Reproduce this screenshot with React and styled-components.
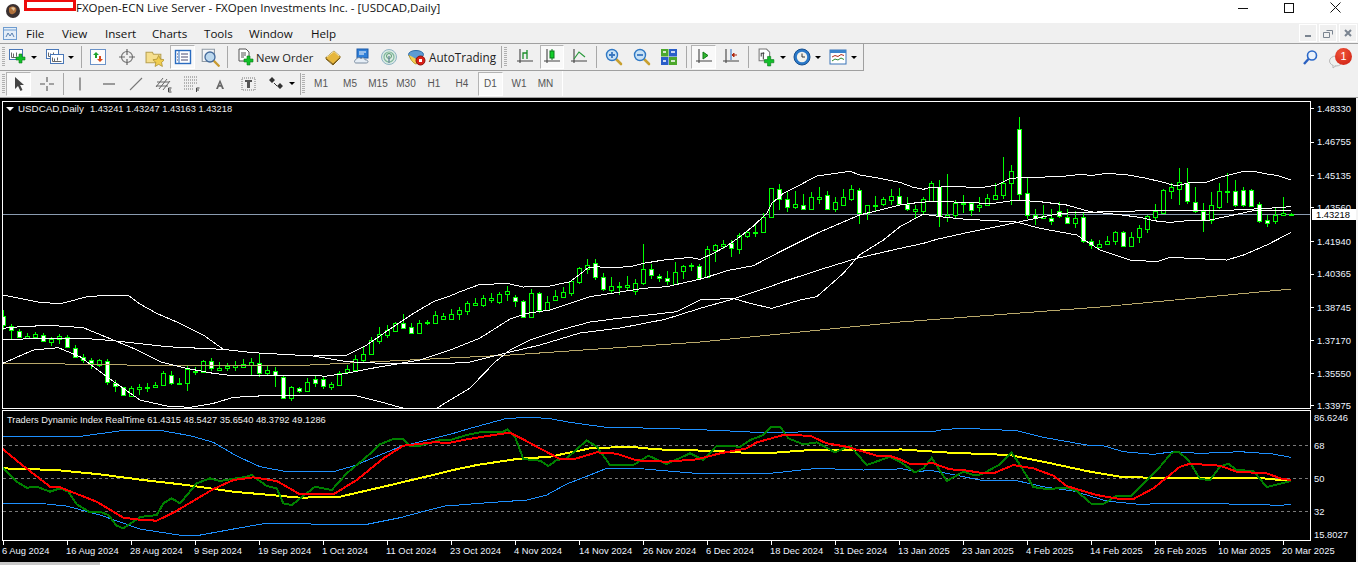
import React from "react";
import styled, { createGlobalStyle } from "styled-components";

const Global = createGlobalStyle`
  html, body { margin: 0; padding: 0; background: #fff; overflow: hidden; }
  #root { width: 1358px; height: 565px; }
`;

const Screen = styled.div`
  width: 1358px; height: 565px; display: flex; flex-direction: column; overflow: hidden;
  font-family: "Open Sans", "Noto Sans", sans-serif; color: #000; background: #f4f4f4;
`;
const TitleBar = styled.header`
  height: 23px; flex: none; background: #fff; display: flex; align-items: flex-start; position: relative;
`;
const AppIcon = styled.div`margin: 1px 0 0 6px; width: 14px; height: 14px; flex: none;`;
const Redacted = styled.div`
  width: 52px; height: 11px; box-sizing: border-box; margin-left: 4px; flex: none;
  background: #fff; border: solid #ee0a0a; border-width: 2px 3px 3px 3px;
`;
const TitleText = styled.div`
  font-size: 11.5px; line-height: 16px; margin-top: 0; color: #111; white-space: nowrap;
`;
const WinButtons = styled.div`margin-left: auto; display: flex; height: 15px;`;
const WinBtn = styled.div`width: 46px; height: 15px; display: flex; align-items: center; justify-content: center;`;
const MenuBar = styled.nav`
  height: 20px; flex: none; background: #f0f0f0; display: flex; align-items: center;
`;
const MenuIcon = styled.div`width: 26px; height: 20px; display:flex; align-items:center; padding-left:3px; box-sizing:border-box;`;
const MenuItem = styled.span`
  font-size: 11.6px; width: ${p => p.$w}px; color: #111;
`;
const MdiGroup = styled.div`margin-left: auto; display: flex; gap: 2px; margin-right: 1px;`;
const MdiBtn = styled.div`
  width: 16px; height: 16px; border: 1px solid #fff; display: flex; align-items: center; justify-content: center;
`;
const Bars = styled.div`
  flex: none; background: #f0f0f0; border-top: 1px solid #a0a0a0; border-bottom: 1px solid #a0a0a0; height: 53px;
  display: flex; flex-direction: column;
`;
const BarRow = styled.div`display: flex; height: ${p => p.$h}px; flex: none;`;
const Toolbar = styled.div`
  display: flex; align-items: center; height: 100%; padding-left: 2px; box-sizing: border-box;
  border-right: 1px solid ${p => p.$edge};
  border-bottom: ${p => p.$bottom ? "1px solid #a0a0a0" : "none"};
  width: ${p => p.$w}px; flex: none;
`;
const Grip = styled.div`
  width: 3px; height: 20px; flex: none; margin-right: ${p => p.$mr || 0}px; margin-left: ${p => p.$ml || 0}px;
  background: repeating-linear-gradient(to bottom, #b0b0b0 0 1px, #f0f0f0 1px 2px);
`;
const Btn = styled.div`
  width: ${p => p.$w}px; margin-left: ${p => p.$ml || 0}px; height: 24px; flex: none; box-sizing: border-box;
  display: flex; align-items: center; justify-content: ${p => p.$left ? "flex-start" : "center"};
  padding-left: ${p => p.$pl || 0}px; gap: ${p => p.$gap || 0}px;
  ${p => p.$active ? `
    background: #f9f9f9;
    border-top: 1px solid #b4b4b4; border-left: 1px solid #b4b4b4;
    border-right: 1px solid #fff; border-bottom: 1px solid #fff;
  ` : ""}
`;
const Sep = styled.div`
  width: ${p => p.$w}px; height: 22px; flex: none; display: flex; justify-content: center;
  &::before { content: ""; width: 1px; height: 100%; background: #a8a8a8; }
`;
const Caret = styled.span`
  width: 0; height: 0; flex: none; border-left: 3px solid transparent; border-right: 3px solid transparent;
  border-top: 3px solid #000;
`;
const BtnLabel = styled.span`font-size: ${p => p.$size}px; color: #222; white-space: nowrap;`;
const Period = styled.span`font-family: "Liberation Sans", sans-serif; font-size: 10px; color: #555;`;
const RightTools = styled.div`display: flex; margin-left: auto; align-items: center; height: 100%; gap: 10px; padding-right: 5px;`;
const Notice = styled.div`
  position: relative; width: 24px; height: 22px; display: flex; align-items: flex-end;
`;
const Badge = styled.span`
  position: absolute; right: 1px; top: 1px; width: 17px; height: 17px; border-radius: 50%;
  background: radial-gradient(circle at 40% 30%, #f0543a, #cc1c10); color: #fff;
  font-size: 11px; line-height: 17px; text-align: center; font-family: "Liberation Sans", sans-serif;
`;
const ChartWindow = styled.main`
  flex: 1; background: #000; display: flex; flex-direction: column; min-height: 0; margin-right: 2px;
  position: relative;
`;
const Pane = styled.svg`display: block; flex: none;`;
const Footer = styled.footer`
  height: 3px; flex: none; display: flex; background: #fff;
`;
const FooterTab = styled.div`width: 100px; background: #c8c8c8;`;
const Legend = styled.div`
  position: absolute; left: ${p => p.$x}px; top: ${p => p.$y}px; color: #f0f0f0; white-space: pre;
  font: 9.3px/12px "Liberation Sans", sans-serif; display: flex; align-items: center; gap: 4px;
`;
const LegendName = styled.span`font-size: 9.8px; margin-right: 2px;`;
const LegendMark = styled.span`
  width: 0; height: 0; border-left: 4px solid transparent; border-right: 4px solid transparent; border-top: 4px solid #fff;
`;
const AxisText = styled.text`
  font-family: "Liberation Sans", sans-serif; font-size: 9.4px; fill: ${p => p.$fill || "#eef4ff"};
`;

/* [high, bodyTop, bodyBottom, low, bearish-white] in crop coordinates (y = origin + v/3) */
const C1 = [[90,108,135,150,1],[132,137,150,178,1],[148,154,170,173,1],[158,168,175,178,0],[155,162,172,178,0],[158,164,184,186,1],[172,178,185,198,0],[162,168,178,192,0],[165,170,202,205,1],[195,203,230,233,1],[222,230,240,248,1],[235,240,250,268,1],[236,241,256,262,0],[238,242,306,314,1],[300,308,318,336,1],[320,322,345,348,1],[318,325,348,350,0],[312,320,326,345,0],[308,320,322,336,0],[306,316,320,324,0],[272,280,316,318,0],[272,284,310,314,1],[295,309,310,311,0],[258,268,310,332,0],[262,272,277,285,1],[240,244,276,278,0],[235,244,264,272,1],[246,264,270,274,0],[248,258,265,273,0],[243,256,260,272,0],[238,253,260,264,0],[235,247,255,286,0],[220,248,278,292,1],[255,271,278,286,0],[262,272,286,320,1],[288,290,354,356,1],[318,322,354,362,0],[320,323,334,338,1],[295,305,334,336,0],[288,298,308,322,1],[288,298,318,326,1],[305,313,320,330,0],[274,278,314,316,0],[255,268,277,282,0],[225,238,270,276,0],[202,223,240,250,0],[172,180,222,226,0],[140,163,184,192,0],[135,151,164,175,0],[125,130,152,156,0],[102,130,143,147,1],[128,142,158,160,1],[120,130,158,162,0],[120,126,130,136,0],[94,105,128,130,0],[100,108,116,120,0]];
const C2 = [[628,642,656,660,0],[622,631,643,660,0],[603,610,632,645,0],[595,610,614,618,0],[586,595,614,620,0],[580,595,601,608,0],[575,583,605,612,0],[558,574,583,604,0],[585,590,604,622,1],[600,604,652,655,1],[568,580,652,654,0],[575,580,629,640,1],[588,606,630,632,0],[570,589,601,603,0],[562,577,590,594,0],[540,544,579,588,0],[502,505,545,552,0],[478,494,508,522,0],[478,490,532,540,1],[520,532,568,572,1],[532,557,569,578,0],[545,558,560,585,0],[528,556,561,572,0],[538,550,572,586,0],[432,508,550,554,0],[492,508,526,536,1],[522,527,535,546,1],[514,535,544,555,1],[486,517,551,553,0],[494,499,514,538,0],[490,496,497,514,0],[492,499,533,538,1],[438,448,530,532,0],[432,436,450,486,0],[420,431,438,446,0],[420,430,445,472,1],[400,406,446,462,0],[390,396,408,414,0],[372,395,398,412,0],[340,352,395,398,0],[264,265,352,354,0],[252,268,298,330,1],[275,298,320,336,1],[274,313,320,328,0],[282,314,326,330,1],[275,292,326,328,0],[262,290,296,312,0],[274,286,326,330,1],[290,307,326,336,0],[268,292,314,318,0],[256,268,296,304,0],[265,271,339,372,1],[315,316,340,360,0],[288,314,316,336,0],[292,298,312,318,0],[266,287,299,316,0],[265,287,312,314,1],[290,313,328,332,1],[315,328,332,354,0],[292,298,332,345,0],[243,250,303,306,0],[240,262,348,380,1],[222,345,350,365,0],[300,310,346,355,0],[285,308,309,338,0],[305,309,331,348,1],[292,314,322,336,0],[282,295,315,318,0],[250,284,296,300,0],[170,248,284,298,0],[195,212,248,315,0],[52,88,282,300,1],[232,280,346,356,1],[328,344,354,375,1],[316,349,355,358,0],[328,355,364,374,1],[306,332,348,354,1],[326,350,368,370,1],[332,355,368,385,0],[340,352,424,430,1],[418,424,434,448,1],[420,433,442,444,0],[408,424,433,435,0],[392,397,422,434,0],[392,397,438,440,1],[396,412,437,440,0],[376,385,412,430,0],[346,349,386,398,0],[312,333,350,362,0],[266,271,339,342,0],[250,260,274,296,0],[204,247,268,315,0],[204,248,304,312,1],[262,305,334,338,1],[310,334,360,395,1],[276,316,360,372,0],[248,274,320,326,0],[220,273,275,310,0],[240,274,316,320,1],[262,271,314,322,1],[268,271,318,322,1],[306,311,364,370,1],[344,361,368,380,1],[325,344,362,372,0],[290,340,344,348,0],[338,341,344,348,0]];

const candles = [
  ...C1.map(c => [280 + c[0]/3, 280 + c[1]/3, 280 + c[2]/3, 280 + c[3]/3, c[4]]),
  ...C2.map(c => [100 + c[0]/3, 100 + c[1]/3, 100 + c[2]/3, 100 + c[3]/3, c[4]]),
];

const conv = (pts, ox, oy) => pts.map(([x, y]) => [ox + x/3, oy + y/3]);
/* the small offset keeps flat segments off the pixel boundary, where crisp strokes would vanish */
const pstr = pts => pts.map(([x, y]) => `${(x + 0.03).toFixed(2)},${(y + 0.03).toFixed(2)}`).join(" ");

const A = [...conv([[8,45],[120,67],[180,71],[210,64],[260,50],[320,46],[385,46],[420,72],[470,100],[540,130],[610,165],[670,208],[760,218],[940,228],[1040,226],[1100,195],[1180,140],[1240,100],[1300,65],[1350,48]],0,280),
  ...conv([[30,575],[90,553],[110,553],[170,550],[220,561],[300,558],[360,545],[415,503],[440,500],[470,503],[540,500],[580,490],[640,480],[720,472],[750,478],[790,460],[830,438],[870,410],[910,378],[950,340],[965,310],[1000,280],[1040,260],[1100,228],[1200,214],[1230,225],[1290,235],[1350,247]],450,100),
  ...conv([[40,262],[70,268],[90,262],[150,260],[250,262],[290,255],[330,235],[380,232],[480,230],[550,222],[570,227],[620,220],[680,224],[740,235],[790,247],[830,258],[870,247],[920,246],[960,232],[1030,214],[1060,214],[1100,222],[1130,226],[1172,240]],900,100)];
const B = [...conv([[8,145],[60,140],[150,136],[250,143],[340,180],[400,205],[480,245],[560,265],[640,280],[700,287],[980,288],[1040,280],[1130,262],[1260,240],[1350,210]],0,280),
  ...[[480,338],[510,319]],
  ...conv([[230,640],[300,630],[420,590],[580,565],[650,560],[760,535],[830,512],[910,497],[990,455],[1100,400],[1228,345],[1350,315]],450,100),
  ...conv([[50,308],[110,303],[200,308],[280,310],[350,300],[420,305],[500,315],[570,335],[650,343],[720,352],[760,362],[810,367],[860,362],[930,360],[1000,345],[1060,332],[1110,330],[1172,331]],900,100)];
const D = [...conv([[8,178],[240,174],[340,182],[500,200],[670,208],[760,218],[940,228],[1040,245],[1150,250],[1350,250]],0,280),
  [470,362],[510,352],[540,345],[580,333],[620,328],
  ...conv([[645,658],[750,625],[850,597],[960,560],[1000,545],[1100,512],[1220,475],[1350,445]],450,100),
  ...conv([[70,430],[110,418],[200,398],[300,378],[360,365],[480,340],[550,337],[700,333],[1000,330],[1100,325],[1172,320]],900,100)];
const E = [...conv([[8,250],[100,210],[175,203],[240,230],[320,290],[420,360],[500,378],[570,382],[640,370],[700,352],[830,345],[1060,345],[1140,365],[1200,382]],0,280),
  [408,409],[436,409],[445,403],[470,388],[495,362],[510,350],[530,340],[560,330],[590,322],[613,319],
  ...conv([[680,635],[750,600],[850,595],[900,610],[965,625],[1050,600],[1100,590],[1180,520],[1228,465],[1300,420],[1350,380]],450,100),
  ...conv([[70,342],[120,350],[200,358],[280,362],[350,366],[420,385],[530,405],[600,450],[690,480],[770,485],[810,472],[980,480],[1030,465],[1100,435],[1172,398]],900,100)];
const MA = [[3,363],[128,365],[310,365],[450,358],[510,355],[700,342],[790,333],[900,322],[1100,307],[1291,289]];

const ind = (a, b, c) => [...conv(a,0,405),...conv(b,450,405),...conv(c,900,405)];
const BU = ind([[8,95],[235,95],[370,76],[480,76],[570,92],[640,112],[710,153],[780,185],[860,200],[1000,200],[1060,183],[1200,125],[1340,90]],
  [[0,88],[60,70],[170,40],[250,37],[300,41],[360,52],[470,67],[640,70],[800,76],[960,84],[1070,80],[1340,80]],
  [[0,80],[100,80],[130,73],[200,70],[350,77],[430,97],[560,120],[610,122],[670,140],[760,148],[820,140],[900,145],[1020,140],[1120,147],[1172,157]]);
const BL = ind([[8,295],[120,295],[200,303],[300,330],[420,372],[550,392],[590,392],[700,372],[790,356],[1100,358],[1200,338],[1290,314],[1340,302]],
  [[0,302],[100,294],[230,285],[290,270],[350,237],[420,210],[470,190],[560,190],[740,205],[850,205],[960,205],[1100,190],[1240,195],[1340,192]],
  [[0,190],[50,200],[90,196],[130,203],[240,225],[350,227],[430,245],[520,258],[620,288],[720,298],[800,295],[1090,298],[1130,302],[1172,298]]);
const YL = ind([[8,190],[170,195],[300,208],[430,225],[560,240],[700,260],[900,278],[1020,275],[1180,238],[1340,200]],
  [[0,197],[80,180],[200,162],[300,155],[420,130],[540,125],[620,133],[800,138],[900,144],[960,144],[1080,135],[1340,135]],
  [[0,133],[150,143],[330,150],[430,170],[560,198],[660,215],[800,220],[1000,218],[1090,220],[1172,228]]);
const RD = ind([[8,132],[60,175],[150,245],[180,247],[290,290],[370,338],[420,344],[470,347],[520,323],[640,252],[700,225],[760,217],[830,228],[900,268],[1000,268],[1070,225],[1150,160],[1210,122],[1300,112],[1345,113]],
  [[0,113],[50,103],[130,90],[180,83],[220,103],[260,125],[330,162],[370,163],[440,142],[500,146],[560,166],[650,170],[740,163],[810,145],[890,130],[920,112],[1000,90],[1080,92],[1130,115],[1190,125],[1280,152],[1320,153]],
  [[0,163],[30,177],[100,175],[150,193],[190,195],[240,203],[280,205],[340,180],[400,190],[460,212],[500,243],[590,270],[660,282],[700,282],[760,250],[840,185],[870,176],[960,182],[1010,200],[1100,205],[1150,223],[1172,224]]);
const GR = ind([[8,188],[50,230],[80,248],[110,245],[150,260],[180,250],[205,260],[230,298],[270,322],[300,320],[325,330],[350,362],[370,370],[420,336],[470,330],[490,295],[515,280],[540,295],[590,235],[630,220],[660,228],[740,215],[755,210],[800,243],[830,250],[850,295],[875,300],[945,245],[995,255],[1040,205],[1100,155],[1140,118],[1180,102],[1210,102],[1230,122],[1260,122],[1320,105],[1345,105]],
  [[0,105],[50,90],[100,80],[160,80],[172,73],[195,95],[220,162],[270,167],[295,183],[320,165],[350,160],[410,106],[440,125],[480,180],[550,180],[595,152],[650,177],[720,145],[760,165],[800,122],[870,125],[900,105],[940,90],[965,65],[990,65],[1015,100],[1060,118],[1100,112],[1155,142],[1200,122],[1250,180],[1320,155]],
  [[0,170],[45,202],[70,190],[95,158],[140,228],[190,200],[220,210],[245,208],[300,178],[335,143],[360,180],[400,246],[440,252],[500,248],[530,258],[575,297],[610,297],[650,272],[695,272],[780,185],[815,143],[835,140],[865,165],[900,222],[930,225],[960,185],[985,176],[1010,195],[1060,198],[1100,246],[1172,228]]);

const priceLabels = [["1.48330",108],["1.46755",141.5],["1.45135",175],["1.43560",207],["1.41940",241],["1.40365",273.5],["1.38745",307],["1.37170",340],["1.35550",373],["1.33975",405]];
const subLabels = [["86.6246",1314,417],["68",1314,445.5],["50",1314,478],["32",1314,511],["15.8027",1314,534]];
const dates = [["6 Aug 2024",2],["16 Aug 2024",66],["28 Aug 2024",130],["9 Sep 2024",194],["19 Sep 2024",258],["1 Oct 2024",322],["11 Oct 2024",386],["23 Oct 2024",450],["4 Nov 2024",514],["14 Nov 2024",579],["26 Nov 2024",643],["6 Dec 2024",706],["18 Dec 2024",770],["31 Dec 2024",834],["13 Jan 2025",898],["23 Jan 2025",962],["4 Feb 2025",1026],["14 Feb 2025",1090],["26 Feb 2025",1154],["10 Mar 2025",1218],["20 Mar 2025",1282]];

const MAIN_Y = 98, SUB_Y = 409;

const MainChart = () => (
  <Pane width="1356" height={SUB_Y - MAIN_Y} viewBox={`0 ${MAIN_Y} 1356 ${SUB_Y - MAIN_Y}`} shapeRendering="crispEdges">
    <defs>
      <clipPath id="plot"><rect x="3" y="102" width="1307" height="306" /></clipPath>
    </defs>
    <g clipPath="url(#plot)">
      <line x1="3" x2="1310" y1="214.5" y2="214.5" stroke="#8a9bb0" />
      {candles.map((c, i) => {
        const cx = 3.5 + 8 * i;
        const top = Math.round(c[1]) + 0.5, bot = Math.round(c[2]) + 0.5;
        return (
          <g key={i}>
            <line x1={cx} x2={cx} y1={Math.round(c[0])} y2={Math.round(c[3])} stroke="#00ff00" />
            <rect x={cx - 2} y={top} width="4" height={Math.max(1, bot - top)} fill={c[4] ? "#fff" : "#000"} stroke="#00ff00" />
          </g>
        );
      })}
      <polyline points={pstr(MA)} fill="none" stroke="#b9a86a" />
      {[A, B, D, E].map((l, i) => <polyline key={i} points={pstr(l)} fill="none" stroke="#fff" />)}
    </g>
    <rect x="2.5" y="101.5" width="1308" height="307" fill="none" stroke="#fff" />
    {priceLabels.map(([t, y]) => (
      <g key={t}>
        <line x1="1311" x2="1314" y1={Math.round(y) + 0.5} y2={Math.round(y) + 0.5} stroke="#fff" />
        <AxisText x="1317" y={y + 3.5}>{t}</AxisText>
      </g>
    ))}
    <rect x="1312" y="209" width="44" height="11" fill="#fff" />
    <AxisText x="1316" y="218" $fill="#000">1.43218</AxisText>
  </Pane>
);

const SubChart = () => (
  <Pane width="1356" height="153" viewBox={`0 ${SUB_Y} 1356 153`} shapeRendering="crispEdges">
    <defs>
      <clipPath id="sub"><rect x="3" y="411" width="1307" height="130" /></clipPath>
    </defs>
    <g clipPath="url(#sub)">
      {[445, 478, 511].map(y => (
        <line key={y} x1="3" x2="1310" y1={y + 0.5} y2={y + 0.5} stroke="#7a7a7a" strokeDasharray="3 3" />
      ))}
      <polyline points={pstr(BU)} fill="none" stroke="#1e90ff" />
      <polyline points={pstr(BL)} fill="none" stroke="#1e90ff" />
      <polyline points={pstr(YL)} fill="none" stroke="#ffff00" strokeWidth="2" />
      <polyline points={pstr(GR)} fill="none" stroke="#008000" strokeWidth="2" />
      <polyline points={pstr(RD)} fill="none" stroke="#ff0000" strokeWidth="2" />
    </g>
    <rect x="2.5" y="410.5" width="1308" height="130" fill="none" stroke="#fff" />
    {subLabels.map(([t, x, y]) => <AxisText key={t} x={x} y={y + 3.5}>{t}</AxisText>)}
    {dates.map(([t, x], i) => (
      <g key={t}>
        <line x1={3.5 + 64 * i} x2={3.5 + 64 * i} y1="541" y2="545" stroke="#fff" />
        <AxisText x={x} y="554">{t}</AxisText>
      </g>
    ))}
  </Pane>
);

/* ---------- toolbar drawings ---------- */
const Ico = ({ s = 18, children }) => <svg width={s} height={s} viewBox="0 0 18 18">{children}</svg>;
const Plus = ({ x = 9, y = 9, c = "#12c02a" }) => (
  <path d={`M${x+3} ${y}h3v3h3v3h-3v3h-3v-3h-3v-3h3z`} fill={c} stroke="#0a7a1a" strokeWidth=".6" />
);
const WinFrame = ({ x, y, w, h }) => (
  <g>
    <rect x={x} y={y} width={w} height={h} fill="#fff" stroke="#4a78b8" />
    <path d={`M${x+2} ${y+3}v${h-5}h${w-4}`} fill="none" stroke="#666" />
    <path d={`M${x+4} ${y+4}v${h-6}M${x+7} ${y+3}v${h-6}`} stroke="#666" />
  </g>
);
const NewChart = () => <Ico><WinFrame x={0.5} y={1.5} w={13} h={10} /><Plus x={7} y={6} /></Ico>;
const Profiles = () => <Ico><WinFrame x={0.5} y={1.5} w={12} h={9} /><WinFrame x={4.5} y={6.5} w={13} h={9} /></Ico>;
const MarketWatch = () => (
  <Ico>
    <rect x="1.5" y="1.5" width="15" height="15" fill="#fdfdfd" stroke="#6a92c8" />
    <path d="M7 4l3 3H8v3H6V7H4z" fill="#1ca32c" />
    <path d="M11 14l-3-3h2V8h2v3h2z" fill="#d8481c" />
  </Ico>
);
const Nav = () => (
  <Ico>
    <circle cx="9" cy="9" r="5.5" fill="none" stroke="#777" strokeWidth="1.2" />
    <path d="M9 1v6M9 11v6M1 9h6M11 9h6" stroke="#666" strokeWidth="1.2" />
  </Ico>
);
const Favorites = () => (
  <Ico s={19}>
    <path d="M1 4h6l1 2h7v8H1z" fill="#f6df8e" stroke="#b8a050" />
    <path d="M13 7l1.7 3.6 3.8.5-2.8 2.6.8 3.8-3.5-2-3.5 2 .8-3.8-2.8-2.6 3.8-.5z" fill="#f0cd50" stroke="#a88a2a" strokeWidth=".7" />
  </Ico>
);
const Terminal = () => (
  <Ico>
    <rect x="1.5" y="2.5" width="15" height="13" fill="#fff" stroke="#2a6cc0" strokeWidth="1.4" />
    <path d="M5 3v12" stroke="#2a6cc0" />
    <path d="M3 6h1M3 9h1M3 12h1M7 6h7M7 9h7M7 12h7" stroke="#4a4a70" />
  </Ico>
);
const Tester = () => (
  <Ico s={20}>
    <path d="M2 2h11v11H2z" fill="#f2f4f6" stroke="#909aa4" />
    <circle cx="9" cy="9" r="4.5" fill="#bcd8ee" stroke="#466c9c" strokeWidth="1.2" />
    <path d="M12.5 12.5l5 5" stroke="#c89a30" strokeWidth="2" />
  </Ico>
);
const NewOrder = () => (
  <Ico>
    <path d="M2 1h7l3 3v9H2z" fill="#fff" stroke="#555" />
    <path d="M4 5h5M4 7h5M4 9h3" stroke="#555" />
    <Plus x={7} y={8} />
  </Ico>
);
const Editor = () => (
  <Ico>
    <path d="M1.5 10L10 3l6.5 6L9 16z" fill="#e6b63c" stroke="#8a6a20" />
    <path d="M3 9l7-5.5 5 4.5" fill="none" stroke="#f7e4a0" />
    <path d="M2 11l7 6 7-7" fill="none" stroke="#7a5a10" />
  </Ico>
);
const CloudDoc = () => (
  <Ico>
    <rect x="4" y="1" width="11" height="9" fill="#2f7fd8" stroke="#1d5aa8" />
    <path d="M6 4h7M6 6h5" stroke="#fff" />
    <path d="M3 15c-2 0-2-3 0-3.4C3.5 9.5 6.5 9 8 10.5c2-1.5 4 0 4 1.3 3-.3 4.5 3.2 1 3.2z" fill="#e6eef6" stroke="#7a8ca0" />
  </Ico>
);
const Signal = () => (
  <Ico>
    <circle cx="9" cy="9" r="7.5" fill="#dcebe4" stroke="#8fb4c4" />
    <circle cx="9" cy="9" r="5" fill="none" stroke="#7fb89c" strokeWidth="1.2" />
    <circle cx="9" cy="8" r="2.5" fill="none" stroke="#5a9a70" />
    <path d="M9 8v7" stroke="#6a8a9a" strokeWidth="1.4" />
  </Ico>
);
const Auto = () => (
  <Ico>
    <ellipse cx="8" cy="6.5" rx="7.5" ry="4" fill="#5d9bd4" stroke="#2e6ca8" />
    <path d="M1 7c1 4 4 8 7 9 2-1 3-2 4-3" fill="#f3cf52" stroke="#b89828" />
    <circle cx="12.5" cy="12.5" r="4.5" fill="#d82018" stroke="#8a100a" />
    <rect x="11" y="11" width="3" height="3" fill="#fff" />
  </Ico>
);
const AxisGl = () => <path d="M4 1v14M1 13h16" stroke="#444" fill="none" strokeWidth="1.1" />;
const BarsIco = () => <Ico><AxisGl /><path d="M7 11V5h4M11 2v9" stroke="#1a8c28" fill="none" strokeWidth="1.3" /></Ico>;
const CandleIco = () => <Ico><AxisGl /><path d="M9 1v11" stroke="#0a7a1a" /><rect x="7" y="3" width="4" height="7" fill="#12d02a" stroke="#0a7a1a" /></Ico>;
const LineIco = () => <Ico><AxisGl /><path d="M4 11l5-7 6 5" stroke="#2a9a3c" fill="none" strokeWidth="1.2" /></Ico>;
const Lens = ({ minus }) => (
  <Ico>
    <path d="M11 11l5 5" stroke="#c8a030" strokeWidth="2.6" strokeLinecap="round" />
    <circle cx="7" cy="7" r="5.5" fill="#c8e2f6" stroke="#2f78c4" strokeWidth="1.4" />
    <path d={minus ? "M4 7h6" : "M4 7h6M7 4v6"} stroke="#3a78c0" strokeWidth="1.8" />
  </Ico>
);
const Tile = () => (
  <Ico>
    <rect x="1" y="1" width="7.5" height="7.5" fill="#4ca82c" />
    <rect x="9" y="1" width="8" height="7.5" fill="#2a5ec8" />
    <rect x="1" y="9" width="7.5" height="8" fill="#2a5ec8" />
    <rect x="9" y="9" width="8" height="8" fill="#4ca82c" />
    <path d="M3 4h3M11 4h4M3 13h3M11 13h4" stroke="#fff" strokeWidth="1.3" />
  </Ico>
);
const AutoScroll = () => <Ico><AxisGl /><path d="M8 4v7l5-3.5z" fill="#2fb82f" stroke="#127a18" /></Ico>;
const Shift = () => <Ico><AxisGl /><path d="M9 1v11" stroke="#2a6cc0" /><path d="M15 7H12M12 5v4l-2-2z" stroke="#b02a10" fill="#b02a10" /></Ico>;
const Indicators = () => (
  <Ico s={19}>
    <path d="M2 1h7l3 3v8H2z" fill="#fff" stroke="#777" />
    <path d="M4 8V5h3M6 4v7" stroke="#444" fill="none" />
    <Plus x={7} y={8} />
  </Ico>
);
const Clock = () => (
  <Ico>
    <circle cx="9" cy="9" r="8" fill="#2a78c8" stroke="#18508e" />
    <circle cx="9" cy="9" r="5.2" fill="#f2f2ec" />
    <path d="M9 5.5V9h3" stroke="#333" fill="none" />
  </Ico>
);
const Template = () => (
  <Ico>
    <rect x="1" y="2" width="16" height="14" fill="#fff" stroke="#3a74b8" />
    <rect x="1" y="2" width="16" height="3" fill="#3a84cc" />
    <path d="M3 9l3-1.5 3 1 3-2 3 1" stroke="#b03020" fill="none" />
    <path d="M3 13l3-2 3 1 3-2 3 1.5" stroke="#2a8a30" fill="none" />
  </Ico>
);
const Cursor = () => <Ico><path d="M5 2v12l3-3 2.5 5 2-1-2.4-5H14z" fill="#444" /></Ico>;
const Cross = () => <Ico><path d="M9 2v5M9 11v5M2 9h5M11 9h5" stroke="#555" strokeWidth="1.1" /></Ico>;
const VLine = () => <Ico><path d="M9 2.5v13" stroke="#555" strokeWidth="1.1" /></Ico>;
const HLine = () => <Ico><path d="M3 9h12" stroke="#555" strokeWidth="1.1" /></Ico>;
const Trend = () => <Ico><path d="M3 15L15 3" stroke="#777" strokeWidth="1.1" /></Ico>;
const Equi = () => (
  <Ico>
    <path d="M1 12L8 3M4 14L12 4M8 15l7-9M2 7h12M1 11h12" stroke="#666" fill="none" />
    <path d="M13.5 13h3M13.5 15h2.5M13.5 17h3M13.5 13v4" stroke="#444" />
  </Ico>
);
const Fibo = () => (
  <Ico>
    <path d="M1 2h13M1 5h13M1 8h13M1 11h10M1 14h10" stroke="#777" strokeDasharray="1 1" />
    <path d="M13.5 13h3M13.5 15h2.5M13.5 13v4" stroke="#444" />
  </Ico>
);
const LetterA = () => <Ico><path d="M9 4.5l-4 9.5h2l.8-2.2h2.4l.8 2.2h2zM8.4 10l.6-2 .6 2z" fill="#666" fillRule="evenodd" /></Ico>;
const TextLabel = () => (
  <Ico>
    <rect x="2" y="3" width="13" height="12" fill="none" stroke="#777" strokeDasharray="1 1" />
    <path d="M5 5h7v2h-2v6H7V7H5z" fill="#555" />
  </Ico>
);
const Arrows = () => (
  <Ico>
    <path d="M2 5l3-3 3 3-3 3zM10 11l3-3 3 3-3 3z" fill="#333" />
    <path d="M7 8l3 3" stroke="#333" />
  </Ico>
);
const Search = () => (
  <Ico>
    <circle cx="11" cy="6.5" r="4.5" fill="#eaf2fb" stroke="#2a68c8" strokeWidth="1.6" />
    <path d="M7.5 10L3 15" stroke="#2a60c0" strokeWidth="2.4" />
  </Ico>
);
const Bubble = () => (
  <svg width="14" height="14" viewBox="0 0 14 14">
    <ellipse cx="7" cy="6" rx="6.5" ry="5" fill="#eef0ee" stroke="#b8b8b8" />
    <path d="M4 10l0 3 3-2.4" fill="#eef0ee" stroke="#b8b8b8" />
  </svg>
);
const Globe = () => (
  <svg width="14" height="14" viewBox="0 0 14 14">
    <circle cx="7" cy="7" r="7" fill="#3a3030" />
    <path d="M3 4c2-2 5-2 7 0 1 2 0 5-3 6-2 1-4-1-4-3z" fill="#b0703a" />
    <path d="M5 4c1-1 3-1 4 0l-1 3z" fill="#e0c8a0" />
  </svg>
);
const MenuGlyph = () => (
  <svg width="15" height="15" viewBox="0 0 15 15">
    <rect x=".5" y="1.5" width="13" height="12" fill="#e4eef8" stroke="#6e9cd0" />
    <path d="M.5 4h13" stroke="#6e9cd0" />
    <path d="M3 11l2-4 2 3 2-3 2 4" fill="none" stroke="#5a80b0" />
  </svg>
);

const TOOLBAR1 = [
  { k: "n", w: 36, icon: <NewChart />, caret: true },
  { k: "p", w: 38, icon: <Profiles />, caret: true },
  { k: "s1", sep: 5 },
  { k: "m", w: 28, icon: <MarketWatch /> },
  { k: "nv", w: 30, icon: <Nav /> },
  { k: "f", w: 24, icon: <Favorites /> },
  { k: "t", w: 25, ml: 4, active: true, icon: <Terminal /> },
  { k: "te", w: 30, icon: <Tester /> },
  { k: "s2", sep: 5 },
];

const TOOLBAR1B = [
  { k: "z1", w: 31, icon: <BarsIco /> },
  { k: "z2", w: 24, active: true, icon: <CandleIco /> },
  { k: "z3", w: 30, icon: <LineIco /> },
  { k: "s4", sep: 5 },
  { k: "zi", w: 29, icon: <Lens /> },
  { k: "zo", w: 27, icon: <Lens minus /> },
  { k: "ti", w: 28, icon: <Tile /> },
  { k: "s5", sep: 6 },
  { k: "as", w: 25, ml: 2, active: true, icon: <AutoScroll /> },
  { k: "sh", w: 30, icon: <Shift /> },
  { k: "s6", sep: 5 },
  { k: "in", w: 40, icon: <Indicators />, caret: true },
  { k: "cl", w: 32, icon: <Clock />, caret: true },
  { k: "te2", w: 40, icon: <Template />, caret: true },
];

const TOOLBAR2 = [
  { k: "cu", w: 25, ml: 1, active: true, icon: <Cursor /> },
  { k: "cr", w: 31, icon: <Cross /> },
  { k: "s", sep: 3 },
  { k: "v", w: 30, icon: <VLine /> },
  { k: "h", w: 27, icon: <HLine /> },
  { k: "tr", w: 28, icon: <Trend /> },
  { k: "e", w: 28, icon: <Equi /> },
  { k: "fi", w: 28, icon: <Fibo /> },
  { k: "a", w: 28, icon: <LetterA /> },
  { k: "tl", w: 29, icon: <TextLabel /> },
  { k: "ar", w: 35, icon: <Arrows />, caret: true },
  { k: "s2", sep: 4 },
];
const PERIODS = [["M1",30,false,1],["M5",28],["M15",28],["M30",28],["H1",28],["H4",28],["D1",25,true,2],["W1",32],["MN",21]];

const renderItems = items => items.map(it => it.sep
  ? <Sep key={it.k} $w={it.sep} />
  : <Btn key={it.k} $w={it.w} $ml={it.ml} $active={it.active} $gap={it.caret ? 4 : 0}>{it.icon}{it.caret && <Caret />}</Btn>);

const menus = [["File",36],["View",43],["Insert",47],["Charts",52],["Tools",45],["Window",62],["Help",40]];

export default function App() {
  return (
    <Screen>
      <Global />
      <TitleBar>
        <AppIcon><Globe /></AppIcon>
        <Redacted />
        <TitleText>FXOpen-ECN Live Server - FXOpen Investments Inc. - [USDCAD,Daily]</TitleText>
        <WinButtons>
          <WinBtn><svg width="10" height="10"><path d="M0 5.5h10" stroke="#111" /></svg></WinBtn>
          <WinBtn><svg width="10" height="10"><rect x=".5" y=".5" width="9" height="9" fill="none" stroke="#111" /></svg></WinBtn>
          <WinBtn><svg width="11" height="11"><path d="M.5.5l10 10M10.5.5l-10 10" stroke="#111" /></svg></WinBtn>
        </WinButtons>
      </TitleBar>
      <MenuBar>
        <MenuIcon><MenuGlyph /></MenuIcon>
        {menus.map(([m, w]) => <MenuItem key={m} $w={w}>{m}</MenuItem>)}
        <MdiGroup>
          <MdiBtn><svg width="10" height="10"><path d="M2 8h6" stroke="#7a8490" strokeWidth="2" /></svg></MdiBtn>
          <MdiBtn><svg width="10" height="10"><path d="M3.5 2.5h6v4M.5 4.5h6v5h-6z" fill="none" stroke="#7a8490" /></svg></MdiBtn>
          <MdiBtn><svg width="10" height="10"><path d="M2 2l6 6M8 2l-6 6" stroke="#7a8490" strokeWidth="2" /></svg></MdiBtn>
        </MdiGroup>
      </MenuBar>
      <Bars>
        <BarRow $h={27}>
          <Toolbar $w={864} $edge="#a0a0a0" $bottom>
            <Grip $ml={0} />
            {renderItems(TOOLBAR1)}
            <Btn $w={90} $left $pl={7} $gap={1}><NewOrder /><BtnLabel $size={11.2}>New Order</BtnLabel></Btn>
            <Btn $w={26}><Editor /></Btn>
            <Btn $w={32}><CloudDoc /></Btn>
            <Btn $w={22}><Signal /></Btn>
            <Btn $w={99} $left $pl={8} $gap={3}><Auto /><BtnLabel $size={11.7}>AutoTrading</BtnLabel></Btn>
            <Sep $w={5} />
            <Grip $mr={2} />
            {renderItems(TOOLBAR1B)}
          </Toolbar>
          <RightTools>
            <Search />
            <Notice><Bubble /><Badge>1</Badge></Notice>
          </RightTools>
        </BarRow>
        <BarRow $h={25}>
          <Toolbar $w={563} $edge="#fff">
            <Grip $ml={0} />
            {renderItems(TOOLBAR2)}
            <Grip $mr={0} />
            {PERIODS.map(([p, w, act, ml]) => (
              <Btn key={p} $w={w} $active={act} $ml={ml}><Period>{p}</Period></Btn>
            ))}
          </Toolbar>
        </BarRow>
      </Bars>
      <ChartWindow>
        <Legend $x={6} $y={5}><LegendMark /><LegendName>USDCAD,Daily</LegendName><span>1.43241 1.43247 1.43163 1.43218</span></Legend>
        <MainChart />
        <Legend $x={7} $y={316}><span>Traders Dynamic Index RealTime 61.4315 48.5427 35.6540 48.3792 49.1286</span></Legend>
        <SubChart />
      </ChartWindow>
      <Footer><FooterTab /></Footer>
    </Screen>
  );
}
